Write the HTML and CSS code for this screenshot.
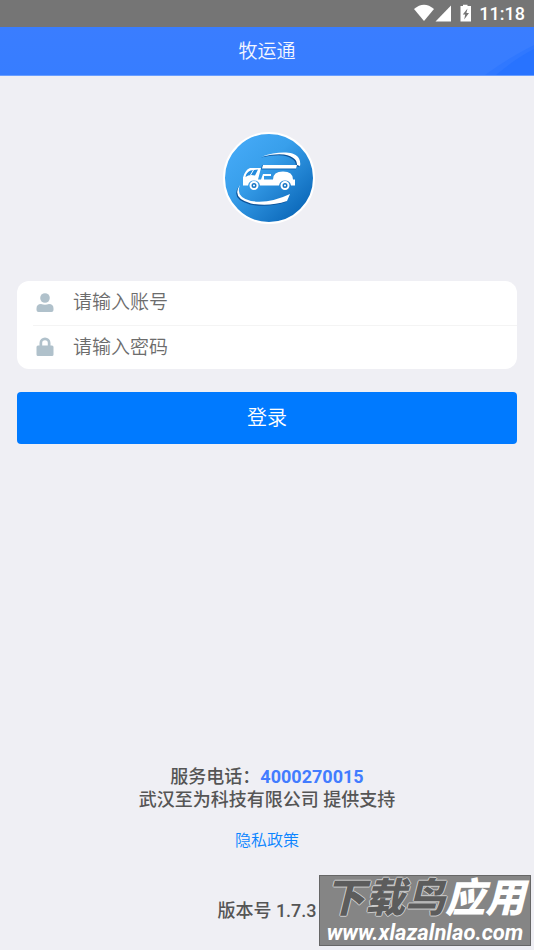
FILE: index.html
```html
<!DOCTYPE html>
<html lang="zh-CN">
<head>
<meta charset="utf-8">
<meta name="viewport" content="width=device-width, initial-scale=1">
<title>牧运通</title>
<link rel="stylesheet" href="styles.css">
</head>
<body>
<div class="status-bar">
  <svg class="status-icons" width="60" height="20" viewBox="0 0 60 20" aria-hidden="true">
    <path fill="#fff" d="M0 5Q10-3.500 20 5L10 17Z"/>
    <path fill="#fff" d="M37 1.500V17.500H21.500Z"/>
    <path fill="#fff" d="M49 2V.8h4.500V2H57v15.500H46.500V2Z"/>
    <path fill="#757575" d="M53.500 4.500L48.800 10.500h2.400L50.200 15.500l4.800-6.500h-2.600Z"/>
  </svg>
  <time class="clock">11:18</time>
</div>
<header class="header">
  <svg class="header-wave" width="90" height="49" viewBox="0 0 90 49" aria-hidden="true">
    <path fill="#3078ff" d="M41 49Q66 31 90 19V49Z"/>
    <path fill="#2873ff" d="M52 49Q72 32 90 23V49Z"/>
  </svg>
  <h1 class="title">牧运通</h1>
</header>
<main class="main">
  <svg class="logo" width="92" height="92" viewBox="0 0 92 92" role="img" aria-label="牧运通">
    <defs>
      <linearGradient id="disc" x1=".15" y1=".15" x2=".85" y2=".9">
        <stop offset="0" stop-color="#43a8f5"/>
        <stop offset=".35" stop-color="#389feb"/>
        <stop offset="1" stop-color="#0b68b9"/>
      </linearGradient>
      <g id="arcs">
        <path d="M39 24.500C53 19.500 70 18.500 75 25Q78 29 77 34L74 33C74 28 71 24.500 61 22.500Q52 21.500 39 24.500Z"/>
        <path d="M17 53Q12 65 28 69Q46 72 67 62L64 69Q46 75 28 71.500Q8 66 17 53Z"/>
      </g>
    </defs>
    <circle cx="46" cy="46" r="45" fill="url(#disc)" stroke="#fff" stroke-width="2"/>
    <use href="#arcs" fill="#0b5299" x="-1" y="1"/>
    <use href="#arcs" fill="#fff"/>
    <path fill="#1468b5" d="M38 37.500L39 33H73V37.500Z"/>
    <path fill="#fff" d="M40 33H74L73 36.500H39Z"/>
    <path fill="#fff" d="M27 36H38L35 47.500H38L40 42H48V44H41V47.500H50Q50 39.500 60 39.500Q70 39.500 70 47.500H72V53.500H68Q67 48.500 62 48.500Q57 48.500 56 53.500H37Q36 48.500 31 48.500Q26 48.500 25 53.500H20V45.500Q22 38 27 36Z"/>
    <path fill="#248bdc" d="M27.500 38.500L35 37.500L32 43.500Q26 42 22.500 45Q23 40.500 27.500 38.500Z"/>
    <path fill="none" stroke="#fff" d="M27.500 43L30.500 38"/>
    <g fill="#1675c4" stroke="#fff" stroke-width="2">
      <circle cx="31" cy="53.500" r="3.500"/>
      <circle cx="62" cy="53.500" r="3.500"/>
    </g>
    <circle cx="31" cy="53.500" r="1" fill="#fff"/>
    <circle cx="62" cy="53.500" r="1" fill="#fff"/>
  </svg>
  <form class="form">
    <div class="fields">
      <div class="field">
        <label for="account" aria-label="账号">
          <svg class="field-icon" width="18" height="20" viewBox="0 0 18 20" aria-hidden="true">
            <circle cx="9" cy="5" r="4.800"/>
            <path d="M.5 17V15.500Q.5 11 5 11Q9 12.500 13 11Q17.500 11 17.500 15.500V17Q17.500 19 15.500 19H2.500Q.5 19 .5 17Z"/>
          </svg>
        </label>
        <input class="input" id="account" type="text" placeholder="请输入账号">
      </div>
      <div class="field">
        <label for="password" aria-label="密码">
          <svg class="field-icon" width="18" height="20" viewBox="0 0 18 20" aria-hidden="true">
            <path fill-rule="evenodd" d="M3.500 8.500V6A5.500 5.500 0 0 1 14.500 6V8.500H16Q17.500 8.500 17.500 10V17.500Q17.500 19 16 19H2Q.5 19 .5 17.500V10Q.5 8.500 2 8.500ZM6.200 8.500H11.800V6A2.800 2.800 0 0 0 6.200 6Z"/>
          </svg>
        </label>
        <input class="input" id="password" type="password" placeholder="请输入密码">
      </div>
    </div>
    <button class="login" type="button">登录</button>
  </form>
</main>
<footer class="footer">
  <p class="support">服务电话：<a class="phone" href="tel:4000270015">4000270015</a></p>
  <p class="support">武汉至为科技有限公司 提供支持</p>
  <a class="privacy" href="#privacy">隐私政策</a>
  <p class="version">版本号 1.7.3</p>
</footer>
<aside class="watermark">
  <div class="mark-name"><span class="mark-dark">下载鸟</span><span>应用</span></div>
  <div class="mark-url">www.xlazalnlao.com</div>
</aside>
</body>
</html>
```
FILE: styles.css
```css
* {
  box-sizing: border-box;
}

body {
  margin: 0;
  min-height: 100vh;
  display: flex;
  flex-direction: column;
  position: relative;
  background: #efeff4;
  color: #555;
  font-family: Roboto, "Noto Sans CJK SC", sans-serif;
}

h1,
p {
  margin: 0;
}

a {
  text-decoration: none;
}

.status-bar {
  display: flex;
  justify-content: flex-end;
  align-items: center;
  gap: 5px;
  height: 27px;
  padding-right: 9px;
  background: #757575;
}

.clock {
  color: #fff;
  font-size: 18px;
  font-weight: 500;
  line-height: 27px;
}

.header {
  position: relative;
  height: 49px;
  background: linear-gradient(#3a7dff, #377dff);
  border-bottom: 1px solid #699eff;
  text-align: center;
}

.header-wave {
  position: absolute;
  right: 0;
  bottom: 0;
}

.title {
  color: #f4f7ff;
  font-size: 19px;
  font-weight: 350;
  line-height: 49px;
}

.main {
  flex: 1;
  display: flex;
  flex-direction: column;
  align-items: center;
  padding: 56px 17px 0;
}

.logo {
  margin-left: 4px;
}

.form {
  width: 100%;
  margin-top: 57px;
}

.fields {
  padding-left: 16px;
  background: #fff;
  border-radius: 12px;
}

.field {
  display: flex;
  align-items: center;
  height: 44px;
  padding: 0 0 1px 3px;
  gap: 19px;
}

.field + .field {
  border-top: 1px solid #f4f4f4;
}

.field-icon {
  display: block;
  fill: #b0c1cb;
}

.input {
  flex: 1;
  min-width: 0;
  height: 42px;
  padding: 0;
  border: 0;
  outline: 0;
  background: transparent;
  color: #333;
  font: inherit;
  font-size: 19px;
  font-weight: 350;
}

.input::placeholder {
  color: #6c6c6c;
}

.login {
  display: block;
  width: 100%;
  height: 52px;
  margin-top: 23px;
  padding: 0 0 3px;
  border: 0;
  border-radius: 4px;
  background: #007aff;
  color: #fff;
  font: inherit;
  font-size: 20px;
  font-weight: 350;
}

.footer {
  display: flex;
  flex-direction: column;
  align-items: center;
  padding-bottom: 28px;
}

.support,
.version {
  font-size: 18px;
  font-weight: 500;
  line-height: 23px;
}

.phone {
  color: #427cff;
  font-weight: 700;
}

.privacy {
  margin-top: 18px;
  color: #0a84ff;
  font-size: 16px;
  font-weight: 350;
  line-height: 24px;
}

.version {
  margin-top: 46px;
}

.watermark {
  position: absolute;
  right: 3px;
  bottom: 4px;
  width: 212px;
  height: 71px;
  display: flex;
  flex-direction: column;
  align-items: center;
  justify-content: center;
  border: 1px solid #666;
  background: #858585;
  color: #fff;
  font-style: italic;
  white-space: nowrap;
}

.mark-name {
  display: flex;
  font-size: 40px;
  font-weight: 900;
  line-height: 44px;
}

.mark-dark {
  color: #5c5c5c;
  text-shadow: 1px 0 #ccc, -1px 0 #ccc, 0 1px #ccc, 0 -1px #ccc;
}

.mark-url {
  font-size: 22px;
  font-weight: 700;
  line-height: 24px;
}
```
